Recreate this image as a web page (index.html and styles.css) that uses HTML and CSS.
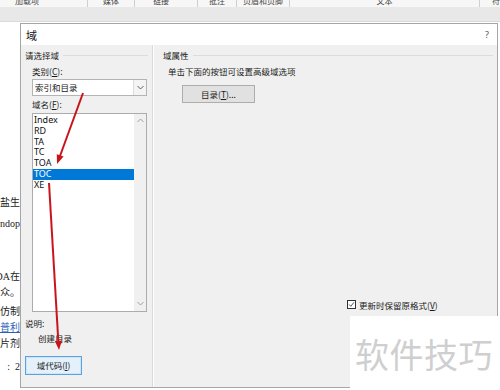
FILE: index.html
```html
<!DOCTYPE html>
<html lang="zh">
<head>
<meta charset="utf-8">
<title>域</title>
<link rel="stylesheet" href="styles.css">
</head>
<body>
<div class="ribbon">
  <div class="groups">
    <div class="grp g1"><span>加载项</span></div>
    <div class="grp g2"><span>媒体</span></div>
    <div class="grp g3"><span>链接</span></div>
    <div class="grp g4"><span>批注</span></div>
    <div class="grp g5"><span>页眉和页脚</span></div>
    <div class="grp g6"><span>文本</span></div>
    <div class="grp g7"><span>符</span></div>
  </div>
  <div class="band"></div>
</div>
<div class="main">
  <div class="doc">
    <div class="dl first"><span>盐生</span></div>
    <div class="dl m5"><span>ndop</span></div>
    <div class="dl m37"><span>DA在</span></div>
    <div class="dl"><span>众。</span></div>
    <div class="dl m3"><span>仿制</span></div>
    <div class="dl link"><span>普利</span></div>
    <div class="dl"><span>片剂</span></div>
    <div class="dl m7"><span>:&nbsp; 2</span></div>
  </div>
  <div class="dialog">
    <div class="titlebar"><span class="ttl">域</span><span class="help">?</span></div>
    <div class="dbody">
      <div class="left">
        <div class="gtitle">请选择域</div>
        <div class="lbl">类别(<u>C</u>):</div>
        <div class="combo"><span class="cval">索引和目录</span><span class="cbtn"><svg width="7" height="5" viewBox="0 0 7 5"><path d="M0.5 1 L3.5 4 L6.5 1" fill="none" stroke="#606060" stroke-width="1"/></svg></span></div>
        <div class="lbl lbl2">域名(<u>F</u>):</div>
        <div class="listbox">
          <div class="items">
            <div class="it">Index</div>
            <div class="it">RD</div>
            <div class="it">TA</div>
            <div class="it">TC</div>
            <div class="it">TOA</div>
            <div class="it sel">TOC</div>
            <div class="it">XE</div>
          </div>
          <div class="sbar">
            <svg width="7" height="5" viewBox="0 0 7 5"><path d="M0.5 4 L3.5 1 L6.5 4" fill="none" stroke="#a0a0a0" stroke-width="1"/></svg>
            <svg width="7" height="5" viewBox="0 0 7 5"><path d="M0.5 1 L3.5 4 L6.5 1" fill="none" stroke="#a0a0a0" stroke-width="1"/></svg>
          </div>
        </div>
        <div class="desc">说明:</div>
        <div class="desctext">创建目录</div>
        <div class="btn btn-focus">域代码(<u>I</u>)</div>
      </div>
      <div class="right">
        <div class="gtitle">域属性</div>
        <div class="hint">单击下面的按钮可设置高级域选项</div>
        <div class="btn btn-toc">目录(<u>T</u>)...</div>
        <div class="chkrow">
          <span class="chk"><svg width="9" height="9" viewBox="0 0 9 9"><path d="M1.5 4.5 L3.6 6.8 L7.6 1.8" fill="none" stroke="#222" stroke-width="1"/></svg></span>
          <span class="chktext">更新时保留原格式(<u>V</u>)</span>
        </div>
      </div>
    </div>
  </div>
</div>
<svg class="arrows" width="500" height="390" viewBox="0 0 500 390">
  <line x1="83" y1="93" x2="60" y2="156" stroke="#c8151b" stroke-width="2"/>
  <polygon points="57,164 63.6,156.6 56.8,154.2" fill="#c8151b"/>
  <line x1="49" y1="183" x2="58.3" y2="341" stroke="#c8151b" stroke-width="2"/>
  <polygon points="59,350 62,340.5 54.8,341" fill="#c8151b"/>
</svg>
<div class="watermark">软件技巧</div>
</body>
</html>
```
FILE: styles.css
```css
* { box-sizing: border-box; }
html, body { margin: 0; padding: 0; }
body {
  width: 500px;
  height: 390px;
  overflow: hidden;
  position: relative;
  background: #ffffff;
  font-family: "Noto Sans", "Noto Sans CJK SC", sans-serif;
  color: #1a1a1a;
}
u { text-decoration: underline; text-underline-offset: 1px; }

.ribbon { height: 22px; }
.groups {
  height: 7px;
  display: flex;
  background: #f7f7f7;
  overflow: hidden;
}
.grp {
  display: flex;
  justify-content: center;
  border-right: 1px solid #cfcfcf;
  font-family: "Noto Sans CJK SC", sans-serif;
  font-size: 8px;
  line-height: 8px;
  color: #444;
}
.grp span { margin-top: -3px; }
.g1 { width: 88px; justify-content: flex-start; padding-left: 15px; }
.g2 { width: 47px; }
.g3 { width: 63px; padding-right: 10px; }
.g4 { width: 39px; }
.g5 { width: 53px; }
.g6 { width: 190px; }
.g7 { flex: 1; border-right: none; justify-content: flex-end; }
.band {
  height: 15px;
  background: #e8e8e8;
  border-bottom: 1px solid #dadada;
}

.main {
  display: flex;
  align-items: flex-start;
}
.doc {
  width: 20px;
  flex: none;
  padding-top: 173px;
  font-family: "Liberation Serif", "Noto Sans CJK SC", serif;
  font-size: 10px;
  color: #222;
}
.dl {
  height: 16px;
  line-height: 16px;
  white-space: nowrap;
  display: flex;
  justify-content: flex-end;
  overflow: hidden;
}
.dl span { flex: none; }
.m5 { margin-top: 5px; }
.m37 { margin-top: 37px; }
.m3 { margin-top: 3px; }
.m7 { margin-top: 7px; }
.link { color: #2f5fb8; }
.link span { text-decoration: underline; }

.dialog {
  width: 478px;
  height: 365px;
  margin-top: 1px;
  border: 1px solid #a6a6a6;
  background: #f0f0f0;
  display: flex;
  flex-direction: column;
  font-family: "Noto Sans CJK SC", sans-serif;
  font-size: 8.5px;
}
.titlebar {
  height: 21px;
  flex: none;
  background: #ffffff;
  display: flex;
  align-items: center;
  justify-content: space-between;
  padding: 0 8px 0 5px;
}
.ttl { font-size: 11px; color: #111; }
.help { font-family: "Noto Sans", sans-serif; font-size: 9px; color: #555; }

.dbody { flex: 1; display: flex; }
.left {
  width: 132px;
  flex: none;
  display: flex;
  flex-direction: column;
  padding: 5px 0 0 4px;
  border-right: 1px solid #d9d9d9;
  box-shadow: 1px 0 0 #ffffff;
}
.gtitle {
  display: flex;
  align-items: center;
  line-height: 11px;
  height: 11px;
  color: #1a1a1a;
}
.gtitle::after {
  content: "";
  flex: 1;
  margin-left: 4px;
  margin-right: 4px;
  border-top: 1px solid #dcdcdc;
}
.lbl {
  margin-left: 7px;
  margin-top: 5px;
  line-height: 11px;
  height: 11px;
}
.lbl2 { margin-top: 3px; }
.combo {
  margin: 2px 0 0 7px;
  width: 115px;
  height: 17px;
  background: #ffffff;
  border: 1px solid #b4b4b4;
  display: flex;
  align-items: center;
}
.cval { flex: 1; padding-left: 2px; line-height: 15px; }
.cbtn {
  width: 13px;
  height: 15px;
  border-left: 1px solid #dcdcdc;
  background: #f4f4f4;
  display: flex;
  align-items: center;
  justify-content: center;
}
.listbox {
  margin: 3px 0 0 7px;
  width: 115px;
  height: 199px;
  background: #ffffff;
  border: 1px solid #acacac;
  display: flex;
}
.items { flex: 1; padding-top: 1px; }
.it {
  font-family: "Noto Sans", sans-serif;
  font-size: 9px;
  line-height: 10.8px;
  height: 10.8px;
  padding-left: 1px;
  color: #111;
}
.it.sel { background: #0078d7; color: #ffffff; }
.sbar {
  width: 12px;
  background: #f0f0f0;
  display: flex;
  flex-direction: column;
  justify-content: space-between;
  align-items: center;
  padding: 4px 0 5px;
}
.desc { margin-top: 6px; line-height: 11px; height: 11px; }
.desctext { margin: 4px 0 0 13px; line-height: 11px; height: 11px; }
.btn {
  display: flex;
  align-items: center;
  justify-content: center;
  line-height: 1;
}
.btn-focus {
  margin-top: 12px;
  width: 57px;
  height: 19px;
  border: 1px solid #5aa2e0;
  background: #e4f0fa;
  box-shadow: inset 0 0 0 1px #cfe4f7;
}

.right {
  flex: 1;
  display: flex;
  flex-direction: column;
  padding: 5px 0 77px 8px;
  margin-left: 2px;
}
.hint { margin: 5px 0 0 5px; line-height: 11px; height: 11px; }
.btn-toc {
  margin: 8px 0 0 19px;
  width: 73px;
  height: 18px;
  border: 1px solid #adadad;
  background: #e1e1e1;
}
.chkrow {
  margin-top: auto;
  margin-left: 184px;
  display: flex;
  align-items: center;
  height: 11px;
}
.chk {
  width: 9px;
  height: 9px;
  border: 1px solid #333;
  background: #ffffff;
  display: flex;
  align-items: center;
  justify-content: center;
  margin-right: 3px;
}
.chk svg { width: 7px; height: 7px; }

.arrows {
  position: absolute;
  left: 0;
  top: 0;
  pointer-events: none;
}
.watermark {
  position: absolute;
  left: 350px;
  top: 316px;
  width: 150px;
  height: 74px;
  background: #ffffff;
  padding: 20px 0 0 5px;
  font-family: "Noto Sans CJK SC", sans-serif;
  font-size: 34px;
  line-height: 36px;
  letter-spacing: 0.5px;
  color: #cfcfcf;
  white-space: nowrap;
}
```
